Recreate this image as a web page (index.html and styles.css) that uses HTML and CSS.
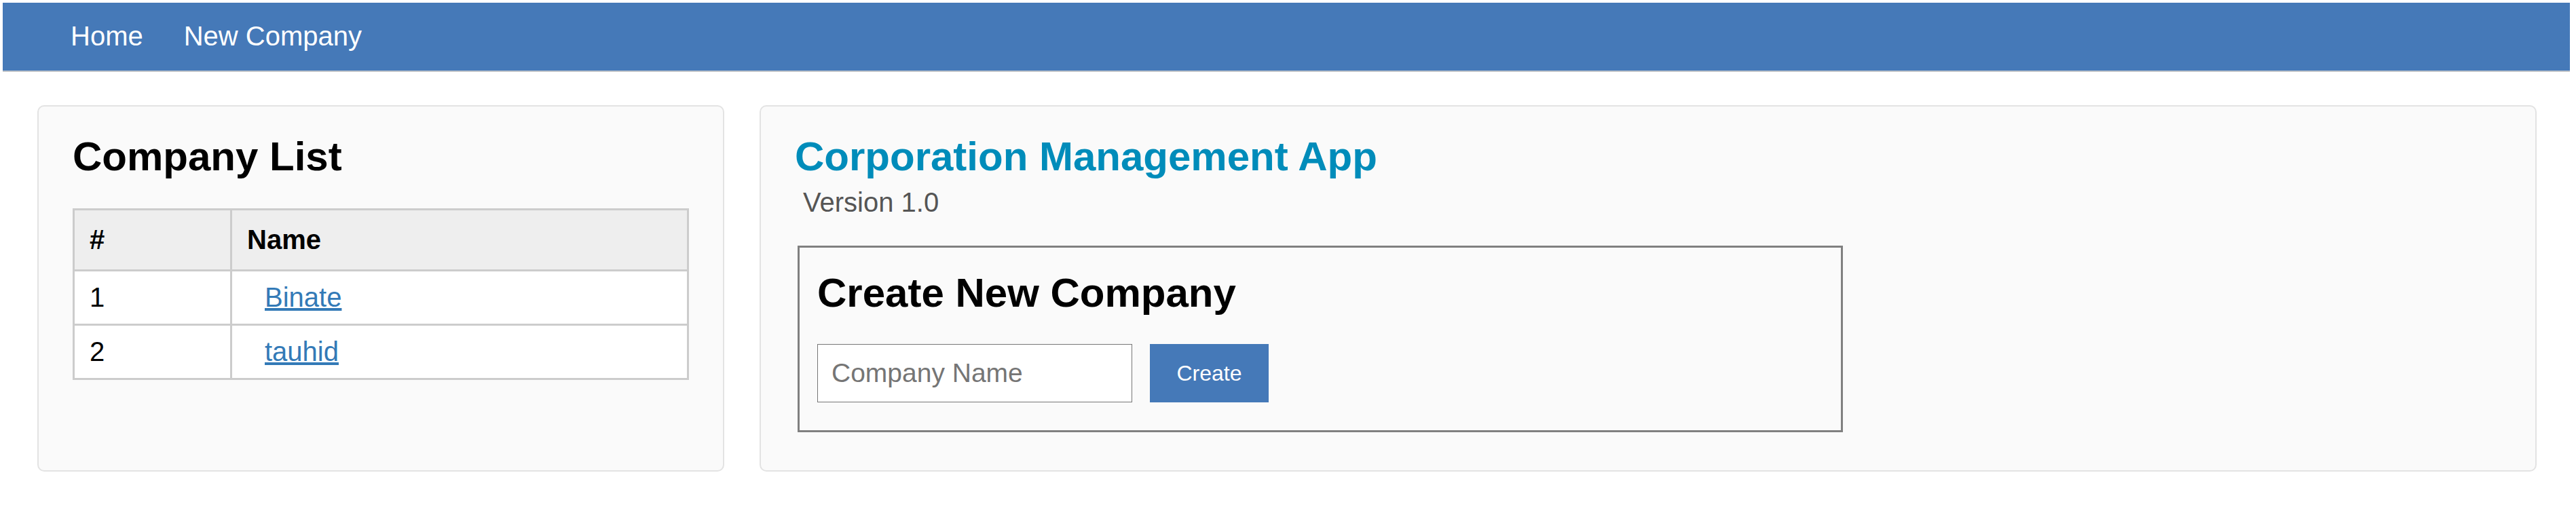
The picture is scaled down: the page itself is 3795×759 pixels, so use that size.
FILE: index.html
```html
<!DOCTYPE html>
<html lang="en">
<head>
<meta charset="utf-8">
<title>Corporation Management App</title>
<link rel="stylesheet" href="styles.css">
</head>
<body>
<nav class="navbar">
  <a class="nav-link" href="#">Home</a>
  <a class="nav-link" href="#">New Company</a>
</nav>
<main class="layout">
  <section class="card card-list">
    <h2 class="card-title">Company List</h2>
    <table class="company-table">
      <thead>
        <tr><th class="col-num">#</th><th>Name</th></tr>
      </thead>
      <tbody>
        <tr><td>1</td><td><a class="company-link" href="#">Binate</a></td></tr>
        <tr><td>2</td><td><a class="company-link" href="#">tauhid</a></td></tr>
      </tbody>
    </table>
  </section>
  <section class="card card-main">
    <h1 class="app-title">Corporation Management App</h1>
    <p class="version">Version 1.0</p>
    <div class="create-box">
      <h2 class="card-title">Create New Company</h2>
      <form class="create-form">
        <input class="company-input" type="text" placeholder="Company Name">
        <button class="create-btn" type="button">Create</button>
      </form>
    </div>
  </section>
</main>
</body>
</html>
```

FILE: styles.css
```css
html, body {
  background: #ffffff;
}

body {
  margin: 4px 9px 0 4px;
  font-family: "Liberation Sans", Arial, sans-serif;
  font-size: 40px;
  line-height: 46px;
  color: #000000;
}

.navbar {
  height: 98px;
  background: #4579b8;
  border-bottom: 2px solid #c2c6ca;
  display: flex;
  align-items: center;
  padding-left: 100px;
  padding-bottom: 2px;
  box-sizing: content-box;
}

.nav-link {
  color: #ffffff;
  text-decoration: none;
  font-size: 40px;
  line-height: 46px;
  margin-right: 60px;
}

.layout {
  display: flex;
  align-items: stretch;
  gap: 52px;
  margin-top: 49px;
  padding: 0 49px 0 51px;
}

.card {
  background: #fafafa;
  border: 2px solid #e3e3e3;
  border-radius: 10px;
  padding: 38px 50px 56px 50px;
}

.card-list {
  flex: 0 0 908px;
}

.card-main {
  flex: 1 1 auto;
}

.card-title {
  margin: 0;
  font-size: 60px;
  line-height: 72px;
  font-weight: bold;
}

.card-list .card-title {
  margin-bottom: 40px;
}

.company-table {
  width: 100%;
  border-collapse: collapse;
  border: 3px solid #cccccc;
  background: #ffffff;
}

.company-table th,
.company-table td {
  border: 3px solid #cccccc;
  text-align: left;
  padding: 15px 22px 16px 22px;
  font-size: 40px;
  line-height: 46px;
}

.company-table th {
  background: #eeeeee;
  font-weight: bold;
  padding-top: 20px;
  padding-bottom: 21px;
}

.col-num {
  width: 185px;
}

.company-link {
  color: #337ab7;
  text-decoration: underline;
  margin-left: 26px;
}

.app-title {
  margin: 0 0 8px 0;
  font-size: 60px;
  line-height: 72px;
  font-weight: bold;
  color: #008cba;
}

.version {
  margin: 0 0 41px 12px;
  color: #555555;
  font-size: 40px;
  line-height: 46px;
}

.create-box {
  width: 1482px;
  margin-left: 4px;
  border: 3px solid #808080;
  padding: 31px 26px 41px 26px;
}

.create-box .card-title {
  margin-bottom: 39px;
}

.create-form {
  display: flex;
  align-items: center;
  gap: 26px;
  margin: 0;
}

.company-input {
  box-sizing: border-box;
  width: 464px;
  height: 86px;
  border: 1px solid #767676;
  background: #ffffff;
  padding: 0 20px;
  font-family: "Liberation Sans", Arial, sans-serif;
  font-size: 39px;
  color: #000000;
  margin: 0;
}

.company-input::placeholder {
  color: #757575;
}

.create-btn {
  box-sizing: border-box;
  width: 175px;
  height: 86px;
  border: none;
  background: #4579b8;
  color: #ffffff;
  font-family: "Liberation Sans", Arial, sans-serif;
  font-size: 32px;
  padding: 0;
  margin: 0;
}
```
